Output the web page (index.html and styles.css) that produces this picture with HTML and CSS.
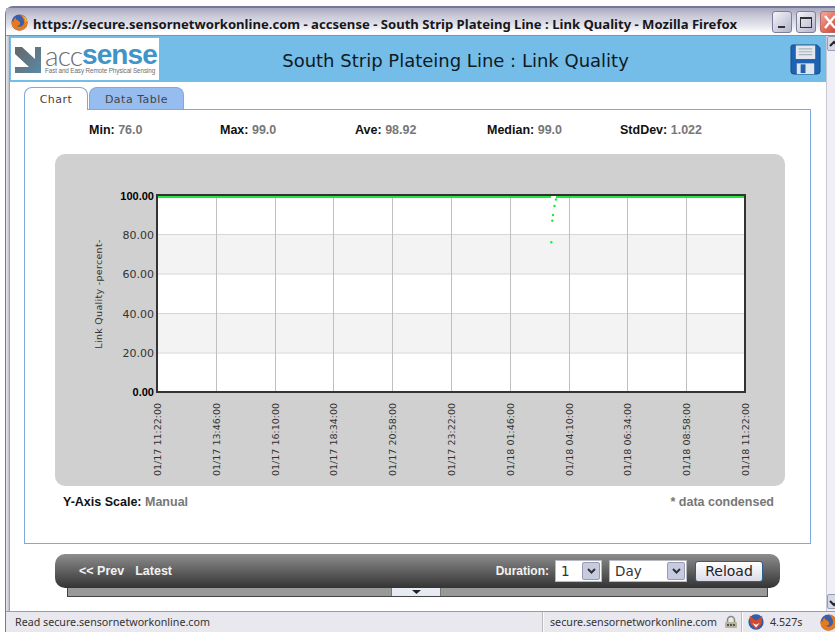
FILE: index.html
```html
<!DOCTYPE html>
<html lang="en">
<head>
<meta charset="utf-8">
<title>South Strip Plateing Line : Link Quality</title>
<link rel="stylesheet" href="styles.css">
</head>
<body>
<div class="window">
  <div class="titlebar">
    <svg class="fx-icon" width="17" height="17" viewBox="0 0 17 17">
      <circle cx="8.5" cy="8.5" r="8" fill="#3a5fa8"/>
      <path d="M8.5 .6a8 8 0 1 1-7.6 5.6c.4 1 1 1.6 1.6 1.9-.2-2 .8-3.6 2.4-4.3-.4 1 0 1.8 1 2.2 1.8.6 3.6 1.6 3.2 3.8-.3 1.6-2 2.4-3.6 1.8 2.8 2.6 7.4.8 7.6-3 .1-3.4-2.2-6.6-4.6-8z" fill="#e8791c"/>
      <path d="M11.5 2.6c2 1.2 3.2 3.4 3 5.8l1.4-1.6c-.5-2.4-2.2-4.2-4.4-4.2z" fill="#f6c23c"/>
    </svg>
    <span class="title-text">https://secure.sensornetworkonline.com - accsense - South Strip Plateing Line : Link Quality - Mozilla Firefox</span>
    <div class="win-btns">
      <span class="win-btn"><svg width="18" height="20" viewBox="0 0 18 20"><rect x="5" y="14" width="7" height="2" fill="#333"/></svg></span>
      <span class="win-btn"><svg width="18" height="20" viewBox="0 0 18 20"><rect x="3.5" y="5.500" width="11" height="10" fill="none" stroke="#333"/><rect x="3" y="5" width="12" height="2" fill="#333"/></svg></span>
      <span class="win-btn win-close"><svg width="18" height="20" viewBox="0 0 18 20"><path d="M4 4l10 12M14 4L4 16" stroke="#fff" stroke-width="2.400"/></svg></span>
    </div>
  </div>

  <div class="viewport">
    <div class="edge"></div>
    <div class="page">
      <header class="page-head">
        <div class="logo">
          <svg class="logo-mark" width="27" height="26" viewBox="0 0 27 26">
            <defs>
              <linearGradient id="markFill" x1="0" y1="0" x2="1" y2="1">
                <stop offset="0" stop-color="#666"/>
                <stop offset="1" stop-color="#5a8aa8"/>
              </linearGradient>
            </defs>
            <path d="M0 0h7l13 12V0h6v26H0v-6h14L0 7z" fill="url(#markFill)"/>
          </svg>
          <div class="logo-words">
            <div class="logo-name"><span class="logo-acc">acc</span><span class="logo-sense">sense</span></div>
            <div class="logo-tag">Fast and Easy Remote Physical Sensing</div>
          </div>
        </div>
        <h1 class="page-title">South Strip Plateing Line : Link Quality</h1>
        <svg class="save-icon" width="31" height="31" viewBox="0 0 32 32">
          <path d="M3 1h25l3 3v24a3 3 0 0 1-3 3H4a3 3 0 0 1-3-3V3a2 2 0 0 1 2-2z" fill="#1f63b0" stroke="#174a86"/>
          <rect x="6" y="1.500" width="20" height="14" fill="#e4e8ee"/>
          <path d="M9 5h14M9 8h14M9 11h14" stroke="#aab2bc" stroke-width="1.200"/>
          <rect x="7" y="20" width="18" height="11" fill="#dfe6ee"/>
          <rect x="11" y="21" width="5" height="9" fill="#1f63b0"/>
        </svg>
      </header>

      <nav class="tabs">
        <span class="tab tab-active">Chart</span>
        <span class="tab">Data Table</span>
      </nav>

      <section class="panel">
        <div class="stats">
          <div><b>Min:</b> <span>76.0</span></div>
          <div><b>Max:</b> <span>99.0</span></div>
          <div><b>Ave:</b> <span>98.92</span></div>
          <div><b>Median:</b> <span>99.0</span></div>
          <div><b>StdDev:</b> <span>1.022</span></div>
        </div>

        <div class="chart-card">
          <svg class="chart" width="730" height="332" viewBox="0 0 730 332">
            <rect x="102" y="41" width="588" height="197" fill="#fff"/>
            <rect x="102" y="80.400" width="588" height="39.400" fill="#f3f3f3"/>
            <rect x="102" y="159.200" width="588" height="39.400" fill="#f3f3f3"/>
            <g class="grid-h">
              <path d="M102 80.500h588M102 120h588M102 159.500h588M102 199h588"/>
            </g>
            <g class="grid-v">
              <path d="M161.500 41v197M220.500 41v197M278.500 41v197M337.500 41v197M396.500 41v197M455.500 41v197M514.500 41v197M572.500 41v197M631.500 41v197"/>
            </g>
            <path class="series" d="M102 43h394M501 43h189"/>
            <g class="points">
              <circle cx="501" cy="45.500" r="1.200"/>
              <circle cx="499.500" cy="52" r="1.300"/>
              <circle cx="498" cy="61" r="1.200"/>
              <circle cx="497.300" cy="66.700" r="1.200"/>
              <circle cx="496.300" cy="88.300" r="1.200"/>
            </g>
            <rect class="frame" x="102" y="41" width="588" height="197"/>
            <g class="y-ticks">
              <text class="y-limit" x="99" y="46">100.00</text>
              <text x="99" y="85">80.00</text>
              <text x="99" y="124">60.00</text>
              <text x="99" y="164">40.00</text>
              <text x="99" y="203">20.00</text>
              <text class="y-limit" x="99" y="242">0.00</text>
            </g>
            <text class="y-title" transform="translate(47 140) rotate(-90)">Link Quality -percent-</text>
            <g class="x-ticks">
              <text transform="translate(106 322) rotate(-90)">01/17 11:22:00</text>
              <text transform="translate(165 322) rotate(-90)">01/17 13:46:00</text>
              <text transform="translate(224 322) rotate(-90)">01/17 16:10:00</text>
              <text transform="translate(282 322) rotate(-90)">01/17 18:34:00</text>
              <text transform="translate(341 322) rotate(-90)">01/17 20:58:00</text>
              <text transform="translate(400 322) rotate(-90)">01/17 23:22:00</text>
              <text transform="translate(459 322) rotate(-90)">01/18 01:46:00</text>
              <text transform="translate(518 322) rotate(-90)">01/18 04:10:00</text>
              <text transform="translate(576 322) rotate(-90)">01/18 06:34:00</text>
              <text transform="translate(635 322) rotate(-90)">01/18 08:58:00</text>
              <text transform="translate(694 322) rotate(-90)">01/18 11:22:00</text>
            </g>
          </svg>
        </div>

        <div class="chart-notes">
          <div><b>Y-Axis Scale:</b> <span>Manual</span></div>
          <div class="condensed">* data condensed</div>
        </div>
      </section>

      <div class="toolbar">
        <div class="pager"><span>&lt;&lt; Prev</span><span>Latest</span></div>
        <div class="range">
          <span class="range-label">Duration:</span>
          <div class="combo combo-num"><span>1</span><i class="combo-btn"><svg width="17" height="17" viewBox="0 0 17 17"><path d="M5 6l3.500 3.500L12 6" fill="none" stroke="#333" stroke-width="2"/></svg></i></div>
          <div class="combo combo-unit"><span>Day</span><i class="combo-btn"><svg width="17" height="17" viewBox="0 0 17 17"><path d="M5 6l3.500 3.500L12 6" fill="none" stroke="#333" stroke-width="2"/></svg></i></div>
          <button class="reload" type="button">Reload</button>
        </div>
      </div>
      <div class="drawer">
        <span class="drawer-handle"><svg width="9" height="4" viewBox="0 0 9 4"><path d="M0 0h9L4.500 4z" fill="#222"/></svg></span>
      </div>
    </div>
    <aside class="scrollbar">
      <span class="scroll-btn"><svg width="10" height="15" viewBox="0 0 10 15"><path d="M2 9l4-4 4 4" fill="none" stroke="#222" stroke-width="2"/></svg></span>
      <span class="scroll-btn"><svg width="10" height="15" viewBox="0 0 10 15"><path d="M2 6l4 4 4-4" fill="none" stroke="#222" stroke-width="2"/></svg></span>
    </aside>
  </div>

  <footer class="statusbar">
    <span class="status-main">Read secure.sensornetworkonline.com</span>
    <span class="status-cell status-host">secure.sensornetworkonline.com
      <svg width="14" height="14" viewBox="0 0 14 14"><path d="M3.500 7V5a3.500 3.500 0 0 1 7 0v2" fill="none" stroke="#8a8a80" stroke-width="1.600"/><rect x="1" y="7" width="12" height="6" rx="1" fill="#b9b59c"/><path d="M3 10h8" stroke="#333" stroke-width="1.600" stroke-dasharray="2 1"/></svg>
    </span>
    <span class="status-cell status-time">
      <svg width="18" height="18" viewBox="0 0 20 20"><circle cx="10" cy="10" r="8.500" fill="#2f5fa8"/><path d="M3 3l6 5h2l6-5-1 9-6 6-6-6z" fill="#d8482a"/><path d="M6 11l4 2 4-2-4 5z" fill="#fff"/></svg>
      4.527s
    </span>
    <span class="status-fx">
      <svg width="17" height="17" viewBox="0 0 17 17"><circle cx="8.500" cy="8.500" r="8" fill="#3a5fa8"/><path d="M8.500.6a8 8 0 1 1-7.600 5.600c.4 1 1 1.600 1.600 1.900-.2-2 .8-3.600 2.400-4.300-.4 1 0 1.800 1 2.200 1.800.6 3.600 1.600 3.200 3.800-.3 1.600-2 2.400-3.600 1.800 2.800 2.600 7.400.8 7.600-3 .1-3.400-2.200-6.600-4.600-8z" fill="#e8791c"/></svg>
    </span>
  </footer>
</div>
</body>
</html>
```

FILE: styles.css
```css
* { box-sizing: border-box; }

html, body {
  margin: 0;
  height: 632px;
  overflow: hidden;
  background: #fff;
  font-family: "Liberation Sans", Arial, sans-serif;
}

/* Browser chrome */
.window {
  width: 840px;
  height: 626px;
  margin: 6px 0 0 5px;
  display: flex;
  flex-direction: column;
  border-top: 2px solid #77779a;
  border-left: 1px solid #77779a;
  border-top-left-radius: 8px;
  background: #f2f2f5;
}

.titlebar {
  height: 28px;
  flex: none;
  display: flex;
  align-items: center;
  padding-left: 5px;
  background: linear-gradient(#a9a9c0 0, #c9c9d8 30%, #e8e8ef 70%, #fff 90%, #fbfbfd 100%);
  border-bottom: 1px solid #8d8da8;
}

.fx-icon { flex: none; margin-top: 2px; }

.title-text {
  flex: none;
  width: 739px;
  margin-left: 5px;
  padding-top: 5px;
  font: 700 13.100px "Noto Sans", sans-serif;
  color: #17171c;
  white-space: nowrap;
}

.win-btns {
  display: flex;
  gap: 4px;
}

.win-btn {
  width: 20px;
  height: 22px;
  border: 1px solid #7d7d9c;
  border-radius: 3px;
  background: linear-gradient(135deg, #f4f4fa, #b3b3cc);
  display: block;
}

.win-btn svg { display: block; }

.win-close {
  border-color: #b96a6a;
  background: linear-gradient(135deg, #f0a99a, #cf3d2a);
}

.viewport {
  flex: 1;
  min-height: 0;
  display: flex;
}

.edge {
  width: 4px;
  flex: none;
  background: linear-gradient(90deg, #e8e8ee, #c8c8d2 60%, #8f8f9c);
}

.page {
  width: 816px;
  flex: none;
  background: #fff;
}

/* Page header */
.page-head {
  height: 46px;
  display: flex;
  align-items: center;
  padding: 0 4px 0 1px;
  background: #74bde9;
}

.logo {
  width: 148px;
  height: 42px;
  flex: none;
  display: flex;
  align-items: center;
  gap: 3px;
  padding: 0 4px;
  background: #fff;
}

.logo-mark { flex: none; margin-top: 2px; }

.logo-words { white-space: nowrap; }

.logo-name {
  display: flex;
  font-size: 28px;
  letter-spacing: -.9px;
}

.logo-name span {
  display: block;
  height: 23px;
  line-height: 22px;
}

.logo-acc { color: #6c6c70; font-family: Lato, sans-serif; font-weight: 300; }
.logo-sense { color: #3f94c8; font-weight: 700; }

.logo-tag {
  font-size: 6.300px;
  line-height: 7px;
  color: #6d6d6d;
  letter-spacing: -.1px;
}

.page-title {
  flex: 1;
  margin: 0;
  padding: 2px 38px 0 0;
  text-align: center;
  font: 400 18px "DejaVu Sans", sans-serif;
  color: #0f1a22;
}

.save-icon { flex: none; margin-right: 1px; }

/* Tabs */
.tabs {
  height: 27px;
  display: flex;
  align-items: flex-end;
  gap: 1px;
  margin-left: 14px;
}

.tab {
  height: 22px;
  width: 95px;
  border: 1px solid #7fa8dc;
  border-bottom: 0;
  border-radius: 8px 8px 0 0;
  background: #97bcf0;
  text-align: center;
  font: 11px/23px "DejaVu Sans", sans-serif;
  color: #444;
  letter-spacing: .5px;
}

.tab-active {
  width: 64px;
  background: #fff;
  position: relative;
  margin-bottom: -1px;
  height: 23px;
}

/* Chart panel */
.panel {
  width: 787px;
  height: 435px;
  margin-left: 14px;
  border: 1px solid #7fa8dc;
  color: #111;
}

.stats {
  display: grid;
  grid-template-columns: 131px 135px 132px 133px auto;
  padding: 13px 0 0 64px;
  height: 44px;
  font-size: 12.500px;
  line-height: 14px;
}

.stats span,
.chart-notes span,
.condensed {
  color: #777;
  font-weight: 700;
}

.chart-card {
  width: 730px;
  height: 332px;
  margin-left: 30px;
  border-radius: 10px;
  background: #d0d0d0;
}

.chart { display: block; }

.chart .grid-h path { fill: none; stroke: #d6d6d6; stroke-width: 1; }
.chart .grid-v path { fill: none; stroke: #c0c0c0; stroke-width: 1; }
.chart .series { fill: none; stroke: #22e840; stroke-width: 2; }
.chart .points circle { fill: #22e840; }
.chart .frame { fill: none; stroke: #333; stroke-width: 2; }

.chart text { font-family: "DejaVu Sans", sans-serif; }
.chart .y-ticks text { font-size: 11px; text-anchor: end; fill: #333; }
.chart .y-ticks .y-limit {
  font-family: "Liberation Sans", Arial, sans-serif;
  font-size: 11px;
  font-weight: 700;
  fill: #000;
}
.chart .y-title { font-size: 9.500px; text-anchor: middle; fill: #333; letter-spacing: .3px; }
.chart .x-ticks text { font-size: 9.500px; fill: #333; }

.chart-notes {
  display: flex;
  justify-content: space-between;
  padding: 9px 36px 0 38px;
  font-size: 12.500px;
  line-height: 14px;
}

/* Bottom toolbar */
.toolbar {
  width: 725px;
  height: 34px;
  margin: 10px 0 0 45px;
  display: flex;
  justify-content: space-between;
  align-items: center;
  padding: 0 17px 0 24px;
  border-radius: 10px;
  background: linear-gradient(#8d8d8d, #333);
  color: #f2f2f2;
  font-size: 12.500px;
  font-weight: 700;
}

.pager { display: flex; gap: 11px; }

.range { display: flex; align-items: center; }

.range-label { margin-right: 6px; font-size: 12px; }

.combo {
  height: 22px;
  display: flex;
  justify-content: space-between;
  align-items: center;
  padding: 0 1px 0 5px;
  background: #fff;
  border: 1px solid #b9b9c4;
  color: #333;
  font: 400 13.500px "DejaVu Sans", sans-serif;
}

.combo-num { width: 47px; margin-right: 7px; }
.combo-unit { width: 78px; margin-right: 8px; }

.combo-btn {
  display: block;
  width: 18px;
  height: 18px;
  border: 1px solid #9a9ab0;
  border-radius: 2px;
  background: #c6cbe0;
}

.combo-btn svg { display: block; }

.reload {
  width: 68px;
  height: 21px;
  padding: 0;
  border: 1px solid #2d5f8e;
  border-radius: 3px;
  background: linear-gradient(#fff, #dcdcea);
  color: #222;
  font: 400 14px "DejaVu Sans", sans-serif;
}

.drawer {
  width: 701px;
  height: 9px;
  margin-left: 57px;
  padding-right: 3px;
  display: flex;
  justify-content: center;
  background: #999;
  border: solid #444;
  border-width: 0 1px 1px;
}

.drawer-handle {
  width: 50px;
  height: 8px;
  display: flex;
  justify-content: center;
  align-items: center;
  background: #e6ebf2;
  border-left: 1px solid #777;
  border-right: 1px solid #777;
}

/* Page scrollbar */
.scrollbar {
  flex: 1;
  display: flex;
  flex-direction: column;
  justify-content: space-between;
  padding-bottom: 2px;
  background: #eef0f6;
  border-left: 1px solid #c8c8d6;
}

.scroll-btn {
  display: block;
  height: 15px;
  border: 1px solid #9a9ab0;
  border-radius: 2px;
  background: #d4d8e8;
}

.scroll-btn svg { display: block; }

/* Status bar */
.statusbar {
  height: 21px;
  flex: none;
  display: flex;
  align-items: center;
  padding-left: 4px;
  border-top: 1px solid #9c9c9c;
  background: #e8e8ee;
  font: 10.700px "Noto Sans", sans-serif;
  color: #333;
}

.status-main { width: 533px; padding-left: 5px; flex: none; }

.status-cell {
  height: 100%;
  flex: none;
  display: flex;
  align-items: center;
  gap: 7px;
  border-left: 1px solid #fafafa;
  box-shadow: -1px 0 0 #bbb;
}

.status-host { width: 199px; padding-left: 6px; }
.status-time { width: 73px; padding-left: 4px; gap: 5px; }
.status-fx { padding-left: 5px; height: 17px; }
```
